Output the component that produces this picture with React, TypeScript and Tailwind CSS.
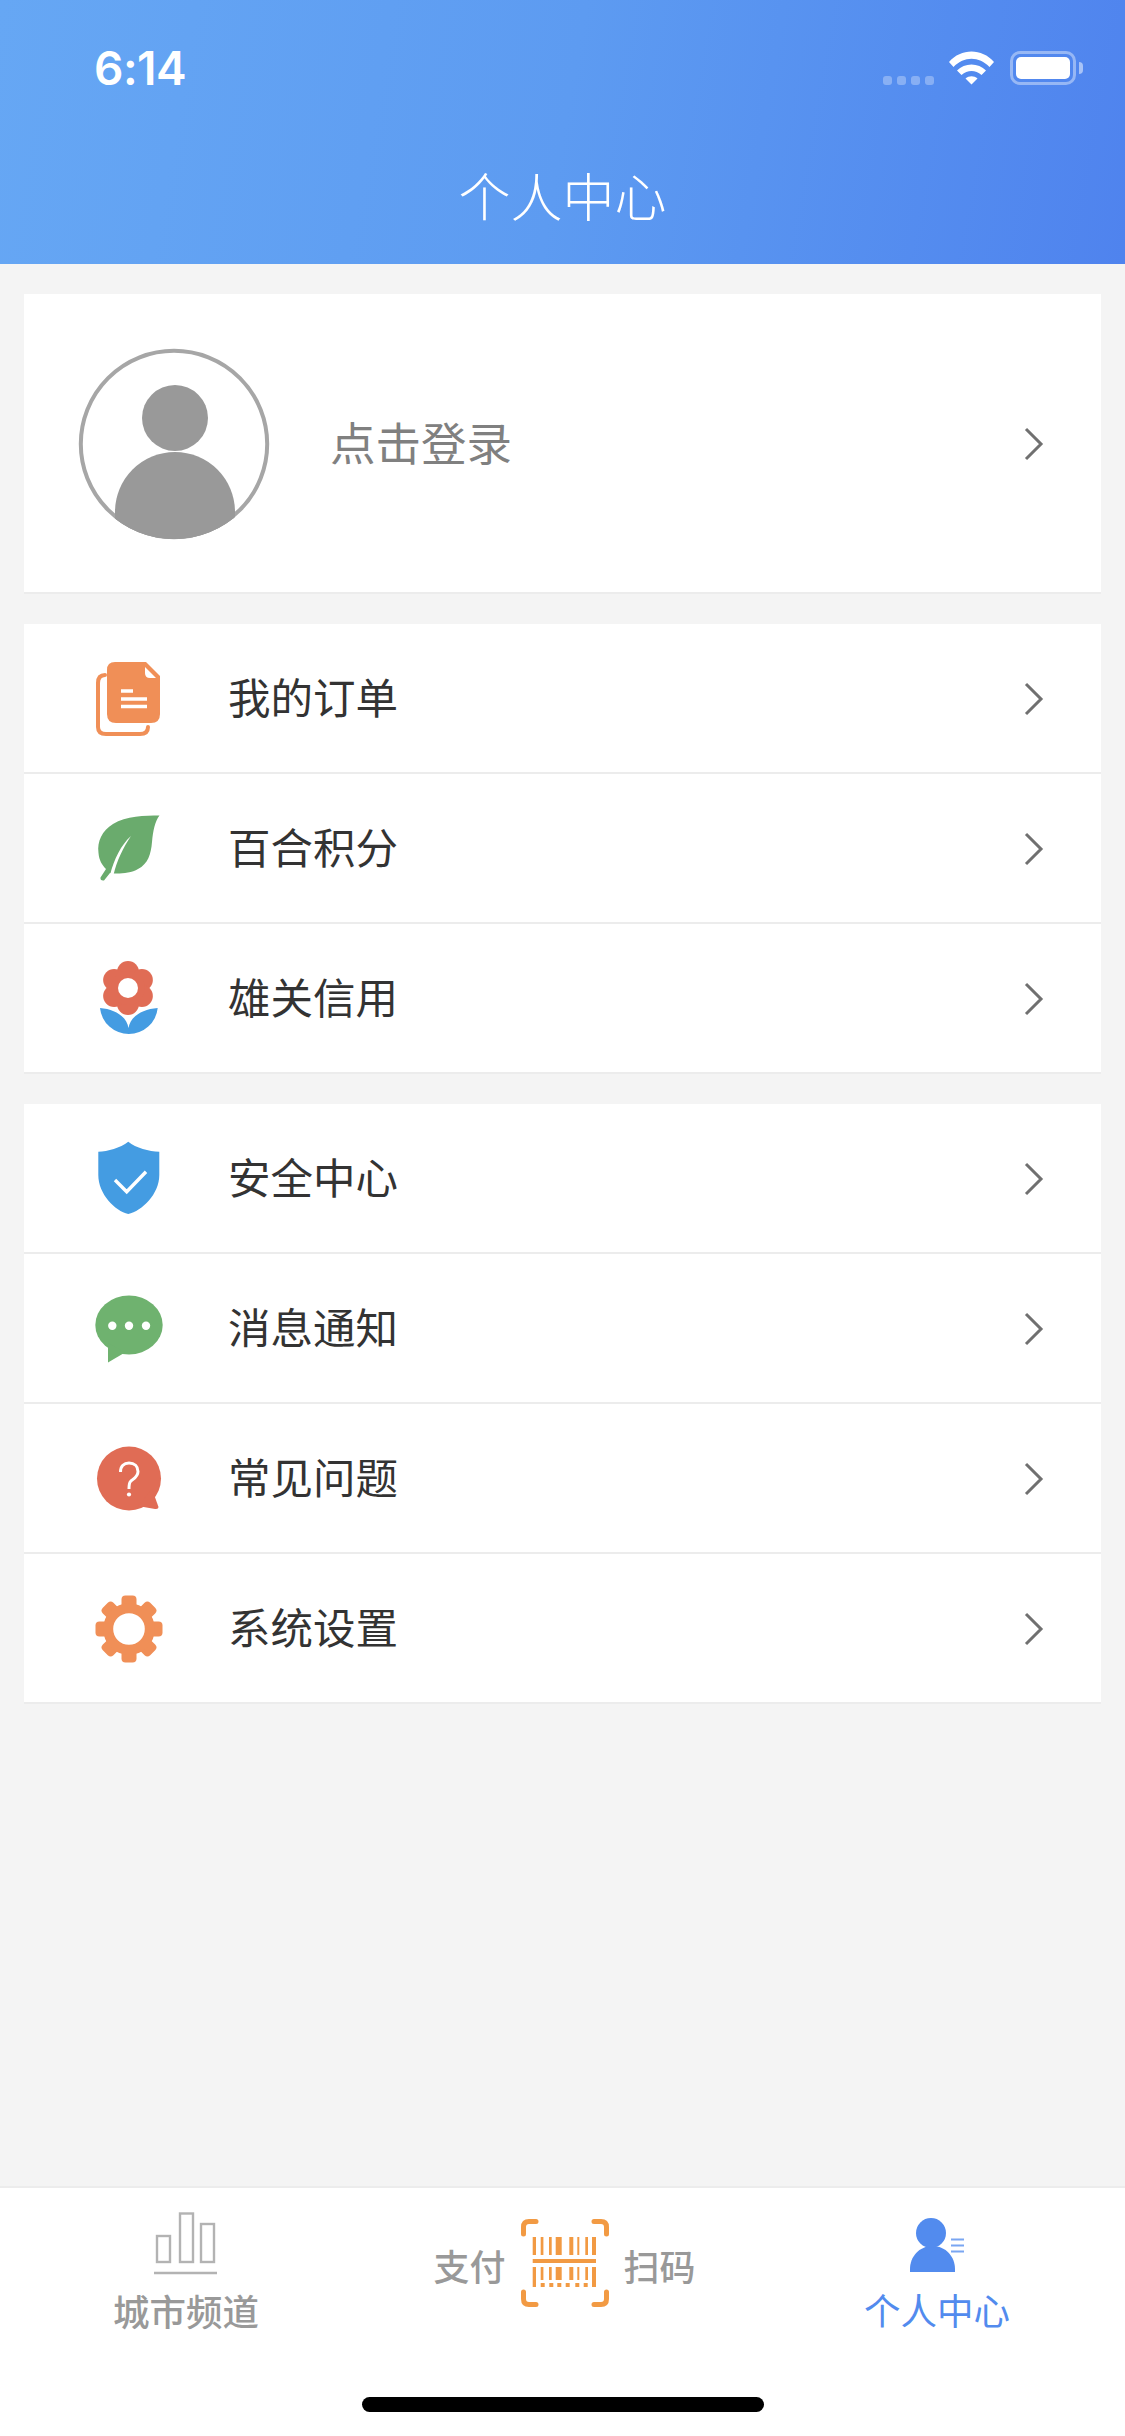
import React from "react";

const F = { fontFamily: '"Noto Sans CJK SC", "Liberation Sans", sans-serif' };

function Chevron() {
  return (
    <svg width="24" height="36" viewBox="0 0 24 36" className="flex-none">
      <path d="M4 3 L19 18 L4 33" fill="none" stroke="#707070" strokeWidth="3" />
    </svg>
  );
}

function Doc() {
  return (
    <svg width="140" height="140" viewBox="0 0 140 140">
      <path d="M45 46 Q38 46 38 54 V98 Q38 105 46 105 H80 Q88 105 88 98" fill="none" stroke="#f08f57" strokeWidth="4" strokeLinecap="round" />
      <path d="M55 33 H86 L100 47 V85 Q100 94 91 94 H56 Q47 94 47 85 V41 Q47 33 55 33 Z" fill="#f08f57" />
      <path d="M85 38 L96 49 H90 Q85 49 85 44 Z" fill="#fff" />
      <path d="M61 62 H73 M61 70 H87 M61 77.5 H87" stroke="#fff" strokeWidth="3.4" fill="none" />
    </svg>
  );
}

function Leaf() {
  return (
    <svg width="140" height="140" viewBox="0 0 140 140">
      <path d="M99.5 36.5 C85 36.5 66 37 53 45 C42 52 37 62 38.5 74 C39 81 42 86 46 90 L40.5 98.5 Q40 102 44 101.5 L50 94 C55 95 70 95 78 90 C88 85 91 75 92 63 C93 52 95 42 99.5 36.5 Z" fill="#6aab6d" />
      <path d="M71 57 C61 66 54 80 50 96 L53.5 96 C57 81 63 69 71 57 Z" fill="#fff" />
    </svg>
  );
}

function Flower() {
  const petals = [0, 60, 120, 180, 240, 300];
  return (
    <svg width="140" height="140" viewBox="0 0 140 140">
      <path d="M40 79 A29 29 0 0 0 97.7 79 C82 80 70 88 68.5 99 C67 88 55 80 40 79 Z" fill="#449ce2" />
      {petals.map((a) => (
        <circle key={a} cx={68 + 16 * Math.sin((a * Math.PI) / 180)} cy={59 - 16 * Math.cos((a * Math.PI) / 180)} r="11" fill="#e06c55" />
      ))}
      <circle cx="68" cy="59" r="17" fill="#e06c55" />
      <circle cx="68" cy="59" r="10" fill="#fff" />
    </svg>
  );
}

function Shield() {
  return (
    <svg width="140" height="140" viewBox="0 0 140 140">
      <path d="M68.3 32.7 C60 39 48 42.4 38.3 42.7 V66 C38.3 85 55 102 68.3 105 C82 102 99.3 85 99.3 66 V42.7 C89 42.4 76 39 68.3 32.7 Z" fill="#449ce2" />
      <path d="M55 71 L66.7 82.7 L86 62.7" fill="none" stroke="#fff" strokeWidth="3.4" />
    </svg>
  );
}

function Chat() {
  return (
    <svg width="140" height="140" viewBox="0 0 140 140">
      <ellipse cx="69" cy="66" rx="33.7" ry="29.5" fill="#6fb26f" />
      <path d="M48 84 V103.5 L65 93.5 Z" fill="#6fb26f" />
      <circle cx="52.3" cy="66.7" r="4.2" fill="#fff" />
      <circle cx="69" cy="66.7" r="4.2" fill="#fff" />
      <circle cx="86" cy="66.7" r="4.2" fill="#fff" />
    </svg>
  );
}

function Help() {
  return (
    <svg width="140" height="140" viewBox="0 0 140 140">
      <circle cx="69" cy="69.5" r="32" fill="#e06c55" />
      <path d="M92 80 L98.5 98 Q98.5 100.5 95 100 L78 97 Z" fill="#e06c55" />
      <path d="M60.5 63 C60.5 57 64 54 69 54 C74.5 54 78 57.5 78 62.5 C78 68 73 70 70.5 72.5 C69 74 69 76 69 80" fill="none" stroke="#fff" strokeWidth="3" />
      <circle cx="69" cy="85.5" r="2.1" fill="#fff" />
    </svg>
  );
}

function Gear() {
  const teeth = [0, 45, 90, 135, 180, 225, 270, 315];
  return (
    <svg width="140" height="140" viewBox="0 0 140 140">
      {teeth.map((a) => (
        <rect key={a} x="61.5" y="36.5" width="15" height="16" rx="4" fill="#f08f57" transform={`rotate(${a} 69 70)`} />
      ))}
      <circle cx="69" cy="70" r="20.8" fill="#fff" stroke="#f08f57" strokeWidth="10" />
    </svg>
  );
}

function Row({ icon, label }: { icon: React.ReactNode; label: string }) {
  return (
    <div className="flex h-[150px] items-center border-b-2 border-[#ececec] pl-[36px] pr-[55px] pt-[1px]">
      <div className="h-[140px] w-[140px] flex-none">{icon}</div>
      <span className="flex-1 pb-[6px] pl-[28px] text-[42.5px] leading-[60px] text-[#333333]" style={F}>
        {label}
      </span>
      <Chevron />
    </div>
  );
}

function StatusBar() {
  return (
    <div className="flex h-[132px] flex-none items-start justify-between pl-[94px] pr-[42px] pt-[40px]">
      <span className="text-[46px] leading-[56px] font-semibold tracking-[-0.5px] text-white" style={{ fontFamily: 'Inter, "Liberation Sans", sans-serif' }}>
        6:14
      </span>
      <div className="flex items-start pt-[11px]">
        <div className="mt-[25px] flex gap-[5px]">
          <span className="h-[9px] w-[9px] rounded-[3px] bg-white/30" />
          <span className="h-[9px] w-[9px] rounded-[3px] bg-white/30" />
          <span className="h-[9px] w-[9px] rounded-[3px] bg-white/30" />
          <span className="h-[9px] w-[9px] rounded-[3px] bg-white/30" />
        </div>
        <svg width="45" height="34" viewBox="0 0 45 34" className="ml-[15px]">
          <path d="M0 11 C12 -3 33 -3 45 11 L40.5 16 C30 5 15 5 4.5 16 Z" fill="#fff" />
          <path d="M8 19.5 C15.5 11.5 29.5 11.5 37 19.5 L32.5 24 C26.5 18.5 18.5 18.5 12.5 24 Z" fill="#fff" />
          <path d="M16.5 27.5 C20 24.5 25 24.5 28.5 27.5 L22.5 33.5 Z" fill="#fff" />
        </svg>
        <div className="ml-[16px] flex h-[34px] w-[66px] items-center justify-center rounded-[10px] border-[3px] border-white/40">
          <div className="h-[22px] w-[54px] rounded-[5px] bg-white" />
        </div>
        <div className="ml-[3px] mt-[11px] h-[12px] w-[4px] rounded-r-[4px] bg-white/50" />
      </div>
    </div>
  );
}

function BarsIcon() {
  return (
    <svg width="66" height="64" viewBox="0 0 66 64">
      <rect x="4" y="24" width="13" height="26" fill="none" stroke="#b3b3b3" strokeWidth="2.4" />
      <rect x="27" y="1.5" width="13" height="48.5" fill="none" stroke="#b3b3b3" strokeWidth="2.4" />
      <rect x="48" y="12" width="13" height="38" fill="none" stroke="#b3b3b3" strokeWidth="2.4" />
      <path d="M1 61 H64" stroke="#b3b3b3" strokeWidth="2.4" />
    </svg>
  );
}

function ScanIcon() {
  const bars: [number, number][] = [
    [11.7, 3.3], [19.7, 2.7], [28, 2.7], [34.7, 6], [48.3, 4], [56.3, 2], [64.3, 2.7], [71, 4],
  ];
  const dots = [19.7, 28.3, 36.3, 44.7, 54.3, 62.7];
  return (
    <svg width="88" height="88" viewBox="0 0 88 88" className="flex-none">
      <g fill="none" stroke="#f29a43" strokeWidth="5" strokeLinecap="round">
        <path d="M15 2.5 H8 Q2.5 2.5 2.5 8 V15" />
        <path d="M73 2.5 H80 Q85.5 2.5 85.5 8 V15" />
        <path d="M15 85.5 H8 Q2.5 85.5 2.5 80 V73" />
        <path d="M73 85.5 H80 Q85.5 85.5 85.5 80 V73" />
      </g>
      <g fill="#f29a43">
        {bars.map(([x, w]) => (
          <rect key={x} x={x} y="18" width={w} height="18" />
        ))}
        <rect x="11.7" y="40" width="63.3" height="4" />
        {bars.map(([x, w], i) => (
          <rect key={x} x={x} y="48" width={w} height={i === 0 || i === 7 ? 20 : 13} />
        ))}
        {dots.map((x) => (
          <rect key={x} x={x} y="64" width="4" height="4" />
        ))}
      </g>
    </svg>
  );
}

function ProfileIcon() {
  return (
    <svg width="56" height="56" viewBox="0 0 56 56">
      <path d="M1 55 V52 C1 40 10 29 23.5 29 C37 29 46 40 46 52 V55 Z" fill="#528bee" />
      <circle cx="22" cy="16" r="15" fill="#528bee" />
      <path d="M42 22.5 H55 M42 28.5 H55 M42 34.5 H55" stroke="#7aa6f2" strokeWidth="2" />
    </svg>
  );
}

export default function App() {
  return (
    <div className="flex h-[2436px] w-[1125px] flex-col overflow-hidden bg-[#f4f4f4]" style={F}>
      <header className="flex h-[264px] flex-none flex-col bg-linear-100 from-[#66a7f4] via-[#5d9bf1] to-[#4f83ee]">
        <StatusBar />
        <h1 className="flex flex-1 items-start justify-center pt-[32px] text-[52px] leading-[62px] font-light text-white" style={F}>
          个人中心
        </h1>
      </header>

      <main className="flex flex-1 flex-col gap-[30px] px-[24px] pt-[30px]">
        <section className="flex h-[300px] items-center border-b-2 border-[#ececec] bg-white pl-[54px] pr-[55px] pt-[1px]">
          <svg width="192" height="192" viewBox="0 0 192 192" className="flex-none">
            <defs>
              <clipPath id="avatarClip">
                <circle cx="96" cy="96" r="95" />
              </clipPath>
            </defs>
            <circle cx="96" cy="96" r="93.2" fill="#fff" stroke="#a6a6a6" strokeWidth="4" />
            <circle cx="97" cy="70" r="33" fill="#999999" />
            <g clipPath="url(#avatarClip)">
              <circle cx="97" cy="164" r="60" fill="#999999" />
              <rect x="37" y="164" width="120" height="30" fill="#999999" />
            </g>
          </svg>
          <span className="flex-1 pb-[5px] pl-[60px] text-[45.5px] leading-[60px] text-[#808080]" style={F}>
            点击登录
          </span>
          <Chevron />
        </section>

        <section className="bg-white">
          <Row icon={<Doc />} label="我的订单" />
          <Row icon={<Leaf />} label="百合积分" />
          <Row icon={<Flower />} label="雄关信用" />
        </section>

        <section className="bg-white">
          <Row icon={<Shield />} label="安全中心" />
          <Row icon={<Chat />} label="消息通知" />
          <Row icon={<Help />} label="常见问题" />
          <Row icon={<Gear />} label="系统设置" />
        </section>
      </main>

      <footer className="flex h-[250px] flex-none flex-col border-t-2 border-[#ececec] bg-white">
        <div className="grid flex-1 grid-cols-3">
          <div className="flex flex-col items-center pr-[3px] pt-[24px]">
            <BarsIcon />
            <span className="mt-[13px] text-[36.5px] leading-[44px] font-medium text-[#999999]" style={F}>
              城市频道
            </span>
          </div>
          <div className="flex items-start justify-center gap-[15px] pl-[4px] pt-[31px]">
            <span className="mt-[24px] text-[36px] leading-[44px] font-medium text-[#999999]" style={F}>
              支付
            </span>
            <ScanIcon />
            <span className="mt-[24px] text-[36px] leading-[44px] font-medium text-[#999999]" style={F}>
              扫码
            </span>
          </div>
          <div className="flex flex-col items-center pr-[1px] pt-[29px]">
            <ProfileIcon />
            <span className="mt-[15px] text-[36.5px] leading-[44px] text-[#528bee]" style={F}>
              个人中心
            </span>
          </div>
        </div>
        <div className="mx-auto mb-[24px] h-[15px] w-[402px] rounded-full bg-black" />
      </footer>
    </div>
  );
}
